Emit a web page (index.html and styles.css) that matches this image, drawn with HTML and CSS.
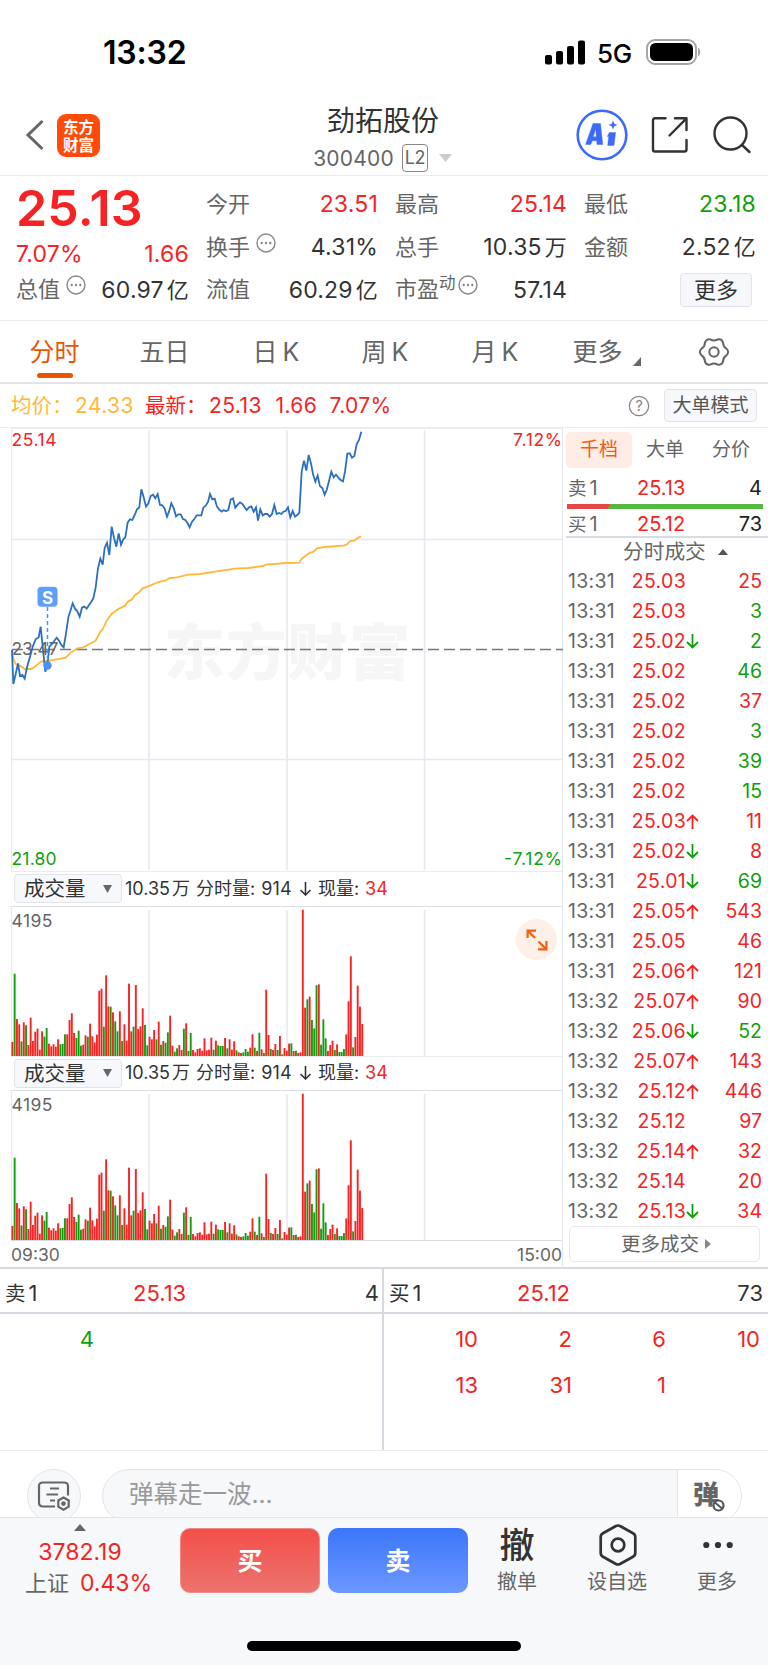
FILE: index.html
```html
<!DOCTYPE html>
<html lang="zh-CN">
<head>
<meta charset="utf-8">
<title>劲拓股份 300400</title>
<link rel="stylesheet" href="styles.css">
</head>
<body>
<div class="statusbar">
  <span class="clock">13:32</span>
  <div class="status-right">
    <svg class="signal" width="40" height="25" viewBox="0 0 40 25"><rect x="0" y="15" width="7" height="9.5" rx="2"/><rect x="11" y="11" width="7" height="13.5" rx="2"/><rect x="22" y="6" width="7" height="18.5" rx="2"/><rect x="33" y="0.5" width="7" height="24" rx="2"/></svg>
    <span class="net">5G</span>
    <svg width="56" height="26" viewBox="0 0 56 26"><rect x="1" y="1" width="49" height="24" rx="8" fill="none" stroke="#a6a6a6" stroke-width="2"/><rect x="4" y="4" width="43" height="18" rx="5.5" fill="#000"/><path d="M52.5 9q3 4 0 8z" fill="#a6a6a6" stroke="#a6a6a6"/></svg>
  </div>
</div>

<header class="header">
  <div class="head-left">
    <svg width="20" height="32" viewBox="0 0 20 32"><path d="M17.5 2L3 16l14.500 14" fill="none" stroke="#666" stroke-width="3"/></svg>
    <div class="logo">东方<br>财富</div>
  </div>
  <div class="head-title">
    <div class="name">劲拓股份</div>
    <div class="code"><span>300400</span><span class="l2">L2</span><svg width="13" height="8" viewBox="0 0 13 8"><path d="M0 0h13L6.500 8z" fill="#ccc"/></svg></div>
  </div>
  <div class="head-right">
    <svg width="52" height="52" viewBox="0 0 52 52"><circle cx="26" cy="26" r="24.300" fill="none" stroke="#3c6bfa" stroke-width="2.600"/><g fill="#3c6bfa" fill-rule="evenodd" stroke="#3c6bfa" stroke-width="0.400" stroke-linejoin="round"><path d="M17 14.500h7.500l2.300 21h-5.800l-.4-3.800h-4.300l-1.500 3.800h-5.300zM17.300 27.800h3l-.6-8z"/><path d="M33.300 23.500h6.300l-1.600 13h-6.300l1-9h-1.400z"/></g><path d="M37 11.500l1.300 3.200 3.200 1.300-3.200 1.300-1.300 3.200-1.300-3.200-3.200-1.300 3.200-1.300z" fill="#3c6bfa"/></svg>
    <svg class="share" width="38" height="38" viewBox="0 0 38 38" fill="none" stroke="#333" stroke-width="2.400" stroke-linecap="round" stroke-linejoin="round"><path d="M14.500 2.300H4Q2 2.300 2 4.300V33.500Q2 35.500 4 35.500H33.500Q35.500 35.500 35.500 33.500V24M24 2.300H35.500V14M35.500 2.300L18.500 19.500"/></svg>
    <svg width="38" height="38" viewBox="0 0 38 38" fill="none" stroke="#333" stroke-width="2.400" stroke-linecap="round"><circle cx="17.500" cy="17.500" r="16"/><path d="M29 29l7.500 7"/></svg>
  </div>
</header>

<section class="quote">
  <div class="qcol first">
    <div class="big red">25.13</div>
    <div class="qrow chg red"><span>7.07%</span><span>1.66</span></div>
    <div class="qrow"><label>总值<svg class="dots"><use href="#i-dots"/></svg></label><span>60.97<i>亿</i></span></div>
  </div>
  <div class="qcol">
    <div class="qrow"><label>今开</label><span class="red">23.51</span></div>
    <div class="qrow"><label>换手<svg class="dots"><use href="#i-dots"/></svg></label><span>4.31%</span></div>
    <div class="qrow"><label>流值</label><span>60.29<i>亿</i></span></div>
  </div>
  <div class="qcol">
    <div class="qrow"><label>最高</label><span class="red">25.14</span></div>
    <div class="qrow"><label>总手</label><span>10.35<i>万</i></span></div>
    <div class="qrow"><label>市盈<sup>动</sup><svg class="dots tight"><use href="#i-dots"/></svg></label><span>57.14</span></div>
  </div>
  <div class="qcol">
    <div class="qrow"><label>最低</label><span class="green">23.18</span></div>
    <div class="qrow"><label>金额</label><span>2.52<i>亿</i></span></div>
    <div class="qrow end"><button class="btn more">更多</button></div>
  </div>
</section>

<nav class="tabs">
  <a class="tab on">分时</a><a class="tab">五日</a><a class="tab">日<b>K</b></a><a class="tab">周<b>K</b></a><a class="tab">月<b>K</b></a>
  <a class="tab tab-more">更多<svg width="8" height="9" viewBox="0 0 8 9"><path d="M8 0v9H0z" fill="#666"/></svg></a>
  <a class="tab"><svg width="34" height="34" viewBox="-17 -17 34 34" fill="none" stroke="#666" stroke-width="2"><path d="M12.460 -3.340Q15.800 0 12.460 3.340Q9.090 5.250 9.120 9.120Q7.900 13.680 3.340 12.460Q0 10.500 -3.340 12.460Q-7.900 13.680 -9.120 9.120Q-9.090 5.250 -12.460 3.340Q-15.800 0 -12.460 -3.340Q-9.090 -5.250 -9.120 -9.120Q-7.900 -13.680 -3.340 -12.460Q0 -10.500 3.340 -12.460Q7.900 -13.680 9.120 -9.120Q9.090 -5.250 12.460 -3.340Z"/><circle r="4.700"/></svg></a>
</nav>

<div class="legend">
  <span class="avg n0">均价：</span><span class="avg n1">24.33</span>
  <span class="red n0">最新：</span><span class="red n2">25.13</span><span class="red n3">1.66</span><span class="red n4">7.07%</span>
  <svg class="help" width="22" height="22" viewBox="0 0 22 22"><circle cx="11" cy="11" r="9.700" fill="none" stroke="#888" stroke-width="1.300"/><text x="11" y="16.300" text-anchor="middle">?</text></svg>
  <button class="btn mode">大单模式</button>
</div>

<main class="main">
  <div class="charts">
    <svg class="price" width="552" height="444" viewBox="11 427 552 444">
      <g class="watermark"><text x="164" y="675" textLength="246">东方财富</text></g>
      <path class="grid" d="M149 430V870M287 430V870M424.500 430V870M12 539.500H563M12 759.500H563"/>
      <path class="edge" d="M11.500 427V871M11 428H563"/>
      <path d="M12 649.500H563" stroke="#777" stroke-width="1.300" stroke-dasharray="11 5"/>
      <text x="11.500" y="655" class="lbl mid" textLength="47">23.47</text>
      <polyline id="avg" fill="none" stroke="#ffb938" stroke-width="1.800"/>
      <polyline id="last" fill="none" stroke="#2a70bf" stroke-width="1.800"/>
      <path d="M47.500 607V662" stroke="#4a90f5" stroke-width="1.500" stroke-dasharray="4 3"/>
      <circle cx="47.500" cy="665.500" r="4.200" fill="#4a90f5"/>
      <rect x="37.500" y="586.700" width="20" height="20" rx="4" fill="#5f9ffb"/>
      <text x="47.500" y="603.500" class="smark">S</text>
      <text x="11.500" y="445.500" class="lbl redf" textLength="45">25.14</text>
      <text x="11.500" y="864.500" class="lbl greenf" textLength="45">21.80</text>
      <text x="562" y="445.500" class="lbl redf" text-anchor="end" textLength="49">7.12%</text>
      <text x="562" y="864.500" class="lbl greenf" text-anchor="end" textLength="58">-7.12%</text>
    </svg>
    <div class="volhead"><button class="btn select">成交量<svg width="9" height="8" viewBox="0 0 9 8"><path d="M0 0h9L4.500 8z" fill="#666"/></svg></button><span class="v1">10.35<i>万</i></span><span class="v2">分时量:</span><span class="v3">914</span><svg class="v4" width="13" height="14" viewBox="0 0 13 14"><path d="M6.500 0v13M1.500 8l5 5 5-5" fill="none" stroke="#333" stroke-width="1.600"/></svg><span class="v5">现量:</span><span class="red">34</span></div>
    <svg class="vol" width="552" height="149" viewBox="11 906 552 149">
      <path class="grid" d="M149 909V1055M287 909V1055M424.500 909V1055"/>
      <path class="edge" d="M11.500 906V1055"/>
      <text x="11.500" y="926" class="lbl mid" textLength="41">4195</text>
      <g id="bars"></g>
    </svg>
    <div class="volhead second"><button class="btn select">成交量<svg width="9" height="8" viewBox="0 0 9 8"><path d="M0 0h9L4.500 8z" fill="#666"/></svg></button><span class="v1">10.35<i>万</i></span><span class="v2">分时量:</span><span class="v3">914</span><svg class="v4" width="13" height="14" viewBox="0 0 13 14"><path d="M6.500 0v13M1.500 8l5 5 5-5" fill="none" stroke="#333" stroke-width="1.600"/></svg><span class="v5">现量:</span><span class="red">34</span></div>
    <svg class="vol last" width="552" height="149" viewBox="11 906 552 149">
      <path class="grid" d="M149 909V1055M287 909V1055M424.500 909V1055"/>
      <path class="edge" d="M11.500 906V1055"/>
      <text x="11.500" y="926" class="lbl mid" textLength="41">4195</text>
      <use href="#bars"/>
    </svg>
    <div class="axis"><span>09:30</span><span>15:00</span></div>
    <div class="expand"><svg width="22" height="22" viewBox="0 0 22 22" fill="none" stroke="#f26010" stroke-width="2.200"><path d="M1.600 9V1.600H10M1.600 1.600L9 9M20.400 12V20.400H12M20.400 20.400L12.500 12.500"/></svg></div>
  </div>

  <aside class="side">
    <div class="sidetabs"><span class="on">千档</span><span>大单</span><span>分价</span></div>
    <div class="lv sell"><span>卖<i>1</i></span><b class="red">25.13</b><em>4</em></div>
    <svg class="ratio" width="196" height="5" viewBox="0 0 196 5"><path d="M0 0H196V5H0z" fill="#56b840"/><path d="M0 0H44L40 5H0z" fill="#e84545"/></svg>
    <div class="lv buy"><span>买<i>1</i></span><b class="red">25.12</b><em>73</em></div>
    <div class="ticktitle">分时成交<svg width="10" height="6" viewBox="0 0 10 6"><path d="M0 6h10L5 0z" fill="#555"/></svg></div>
    <div class="ticks" id="ticks"></div>
    <button class="moreticks">更多成交<svg width="6" height="10" viewBox="0 0 6 10"><path d="M0 0v10l6-5z" fill="#888"/></svg></button>
  </aside>
</main>

<section class="book">
  <div class="half">
    <div class="bhead"><span>卖<i>1</i></span><b>25.13</b><em>4</em></div>
    <div class="cells"><span class="green">4</span></div>
  </div>
  <div class="half">
    <div class="bhead"><span>买<i>1</i></span><b>25.12</b><em>73</em></div>
    <div class="cells red"><span>10</span><span>2</span><span>6</span><span>10</span><span>13</span><span>31</span><span>1</span></div>
  </div>
</section>

<section class="chat">
  <div class="round"><svg width="34" height="31" viewBox="0 0 34 31" fill="none" stroke="#666" stroke-width="2.200"><path d="M18 25.500H6Q2 25.500 2 21.500V5Q2 1.500 6 1.500H27Q31 1.500 31 5V14.500M13 7.500H22M9.500 13.500H21M13 19.500H18"/><path d="M26.500 16.500l5.200 3v6.200l-5.200 3-5.200-3v-6.200z"/><circle cx="26.500" cy="22.600" r="1.300" fill="#666"/></svg></div>
  <div class="pill"><span class="ph">弹幕走一波...</span><div class="toggle"><span>弹</span><svg width="13" height="13" viewBox="0 0 13 13"><circle cx="6.500" cy="6.500" r="5" fill="#fff" stroke="#555" stroke-width="2.200"/><path d="M3 3.500l7 6" stroke="#555" stroke-width="2"/></svg></div></div>
</section>

<footer class="foot">
  <div class="actions">
    <div class="index">
      <svg width="12" height="7" viewBox="0 0 12 7"><path d="M0 7h12L6 0z" fill="#666"/></svg>
      <div class="red iv">3782.19</div>
      <div class="ip"><span>上证</span><b>0.43%</b></div>
    </div>
    <button class="trade tbuy">买</button>
    <button class="trade tsell">卖</button>
    <div class="act a1"><span class="glyph">撤</span><span>撤单</span></div>
    <div class="act a2"><svg width="40" height="44" viewBox="-20 -22 40 44" fill="none" stroke="#333" stroke-width="2.700"><path d="M-2.500 -18.800Q0 -20.200 2.500 -18.800L15 -11.800Q17.300 -10.500 17.300 -8V8Q17.300 10.500 15 11.800L2.500 18.800Q0 20.200 -2.500 18.800L-15 11.800Q-17.300 10.500 -17.300 8V-8Q-17.300 -10.500 -15 -11.800Z"/><circle r="6.300"/></svg><span>设自选</span></div>
    <div class="act a3"><svg width="30" height="44" viewBox="-15 -22 30 44" fill="#333"><circle cx="-11.700" r="3.100"/><circle r="3.100"/><circle cx="11.700" r="3.100"/></svg><span>更多</span></div>
  </div>
  <div class="homebar"></div>
</footer>

<svg width="0" height="0" class="defs"><symbol id="i-dots" viewBox="0 0 20 20"><circle cx="10" cy="10" r="9" fill="none" stroke="#888" stroke-width="1.400"/><circle cx="5.700" cy="10" r="1.200" fill="#888"/><circle cx="10" cy="10" r="1.200" fill="#888"/><circle cx="14.300" cy="10" r="1.200" fill="#888"/></symbol></svg>
<script src="app.js"></script>
</body>
</html>
```
FILE: styles.css
```css
* { box-sizing: border-box; margin: 0; padding: 0; }
body { width: 768px; height: 1665px; background: #fff; color: #333; font-family: Inter, "Noto Sans CJK SC", sans-serif; overflow: hidden; display: flex; flex-direction: column; }
button { font-family: inherit; border: 0; background: none; color: inherit; }
i, em { font-style: normal; }
b { font-weight: 400; }
svg { display: block; flex: none; }
.red { color: #f52323; }
.green { color: #0f9f0f; }
.defs { position: absolute; }
.btn { background: #f7f8fb; border: 1.500px solid #e2e4e9; border-radius: 4px; }

.statusbar { height: 94px; flex: none; display: flex; justify-content: space-between; padding: 32px 66px 0 103px; color: #000; }
.clock { font-size: 32px; line-height: 42px; font-weight: 600; letter-spacing: -0.200px; }
.status-right { display: flex; height: 40px; align-items: center; }
.net { font-size: 26px; font-weight: 500; letter-spacing: -0.200px; margin: 3px 14px 0 12px; }

.header { height: 82px; flex: none; display: grid; grid-template-columns: 300px 166px 302px; border-bottom: 1.500px solid #ececec; }
.head-left { display: flex; align-items: center; padding-left: 25px; gap: 12px; height: 82px; }
.logo { width: 43px; height: 43px; border-radius: 9px; background: #ff4a0a; color: #fff; text-align: center; padding-top: 3px; font: 700 15.500px/18px "Noto Sans CJK SC", sans-serif; }
.head-title { display: flex; flex-direction: column; align-items: center; padding-top: 11px; }
.name { font-size: 28px; line-height: 32px; white-space: nowrap; }
.code { display: flex; align-items: center; height: 28px; margin-top: 7px; font-size: 21px; letter-spacing: 0.200px; color: #666; padding-right: 1px; }
.l2 { width: 26px; height: 28px; border: 1.500px solid #888; border-radius: 4px; font-size: 18px; line-height: 25px; text-align: center; margin: 0 11px 0 8px; letter-spacing: -0.500px; }
.head-right { display: flex; align-items: center; padding-left: 110px; height: 82px; }
.share { margin: 0 24px 0 23px; }

.quote { height: 145px; flex: none; display: grid; grid-template-columns: 173px 172px 172px 172px; column-gap: 17px; padding: 7px 0 0 16px; border-bottom: 1.500px solid #ececec; font-size: 23px; letter-spacing: 0.200px; }
.qcol { display: flex; flex-direction: column; }
.qrow { height: 42.700px; display: flex; align-items: center; justify-content: space-between; line-height: 42px; white-space: nowrap; }
.qrow i { font-size: 22px; margin-left: 3px; }
.qrow label { display: flex; color: #666; font-size: 22px; height: 43px; letter-spacing: 0; }
.qrow.end { justify-content: flex-end; padding-right: 4px; }
.big { height: 50px; line-height: 50px; font-size: 50px; font-weight: 600; }
.chg { height: 35.400px; padding-top: 6px; }
.dots { width: 20px; height: 20px; margin: 7px 0 0 6px; }
.dots.tight { margin-left: 2px; }
.qrow sup { font-size: 16.500px; line-height: 30px; }
.more { width: 72px; height: 34px; font-size: 22px; line-height: 30px; }

.tabs { height: 63px; flex: none; position: relative; border-bottom: 2px solid #e3e4ea; display: grid; grid-template-columns: 109px 111px 112px 106px 114px 109px 105px; font-size: 25px; color: #666; }
.tab { display: flex; justify-content: center; align-items: center; line-height: 60px; position: relative; }
.tab b { margin-left: 5px; }
.tab.on { color: #ea5504; }
.tab.on::after { content: ""; position: absolute; left: 37px; top: 52px; width: 36px; height: 5px; border-radius: 2.500px; background: #ea5504; }
.tab-more svg { margin: 20px 0 0 10px; }

.legend { height: 44px; flex: none; display: flex; align-items: center; padding: 0 11px; font-size: 20.500px; line-height: 28px; border-bottom: 1.500px solid #eee; white-space: nowrap; }
.avg { color: #ffb938; }
.n0 { width: 64px; }
.n1 { width: 70px; }
.n2 { width: 66.500px; }
.n3 { width: 54px; }
.n1, .n2, .n3, .n4 { font-size: 21px; letter-spacing: 0.400px; }
.help { margin-left: auto; margin-right: 14px; }
.help text { font: 15px Inter, sans-serif; fill: #888; }
.mode { width: 93px; height: 33px; font-size: 19px; line-height: 30px; color: #555; }

.main { height: 842px; flex: none; display: grid; grid-template-columns: 552px 205px; padding-left: 11px; margin-top: -1px; border-bottom: 2px solid #d6d9e0; }
.charts { position: relative; display: flex; flex-direction: column; width: 552px; border-right: 1.500px solid #e3e5ec; }
.grid { stroke: #e5e8f0; stroke-width: 1.500; fill: none; }
.edge { stroke: #e8eaef; stroke-width: 1.500; fill: none; }
.lbl { font: 17.500px Inter, sans-serif; }
.mid { fill: #666; }
.redf { fill: #f52323; }
.greenf { fill: #0f9f0f; }
.smark { font: 700 17px Inter, sans-serif; fill: #fff; text-anchor: middle; }
.watermark text { font: 900 61px "Noto Sans CJK SC", sans-serif; fill: #f6f6f6; }
.volhead { height: 35.500px; flex: none; border-top: 1.500px solid #ececf0; border-bottom: 1.500px solid #dcdee5; display: flex; align-items: center; padding-left: 3px; font-size: 18px; line-height: 26px; white-space: nowrap; }
.volhead i { margin-left: 2px; }
.select { width: 108px; height: 29px; display: flex; align-items: center; justify-content: space-between; padding: 0 9px; font-size: 20.500px; line-height: 27px; margin-right: 3px; }
.v2 { margin-left: 6px; }
.v3 { margin-left: 6px; letter-spacing: 0.200px; }
.v4 { margin: 0 6px 0 7px; }
.v5 { margin-right: 6px; }
.axis { border-top: 1.500px solid #d9dce4; display: flex; justify-content: space-between; font-size: 17.500px; line-height: 28px; color: #666; flex: 1; }
.expand { position: absolute; left: 505px; top: 492px; width: 41px; height: 41px; border-radius: 50%; background: #fef0e9; display: flex; align-items: center; justify-content: center; }

.side { display: flex; flex-direction: column; padding: 5px 0 0 3px; color: #666; }
.sidetabs { display: grid; grid-template-columns: repeat(3, 66px); height: 36px; font-size: 19px; line-height: 36px; text-align: center; flex: none; }
.sidetabs .on { background: #ffede5; color: #f8590b; border-radius: 5px; }
.lv { display: grid; grid-template-columns: 69px 60px 1fr; padding: 0 6px 0 2px; height: 34px; line-height: 34px; font-size: 20px; flex: none; }
.lv span { font-size: 18.500px; }
.lv i { font-size: 20px; margin-left: 3px; }
.lv em { text-align: right; color: #222; }
.sell { margin-top: 3px; height: 33px; }
.ratio { margin-left: 1px; }
.buy { height: 28.500px; line-height: 31px; border-bottom: 2px solid #d9dce3; }
.ticktitle { height: 28.500px; flex: none; display: flex; align-items: center; font-size: 20.700px; line-height: 28px; padding: 1px 0 0 57px; gap: 12px; }
.ticks { flex: none; }
.tick { height: 30.030px; line-height: 30px; display: grid; grid-template-columns: 49px 69px 16px 1fr; padding: 0 6px 0 2px; font-size: 19.500px; letter-spacing: 0.300px; align-items: center; }
.tick .p, .tick .q { text-align: right; }
.tick .q { letter-spacing: 0; }
.tick svg { margin-left: 0; }
.moreticks { width: 191px; height: 36px; margin: 0 0 0 3px; border: 1.500px solid #e8e8ec; border-radius: 5px; font-size: 19.500px; line-height: 32px; display: flex; align-items: center; justify-content: center; gap: 6px; flex: none; padding-left: 3px; }

.book { height: 182px; flex: none; display: grid; grid-template-columns: 384px 384px; border-bottom: 1.500px solid #ececec; font-size: 22px; }
.half:first-child { border-right: 2px solid #d6d9e0; }
.bhead { height: 44.500px; padding: 2px 5px 0 5px; line-height: 44px; border-bottom: 2px solid #d6d9e0; display: grid; grid-template-columns: 128px 80px 1fr; }
.bhead span { font-size: 20.500px; }
.bhead i { font-size: 22px; margin-left: 3px; }
.bhead b { color: #f52323; }
.bhead em { text-align: right; }
.half:first-child .bhead { padding-right: 3px; }
.cells { padding-top: 2px; display: grid; grid-template-columns: repeat(4, 94px); grid-auto-rows: 46px; line-height: 46px; text-align: right; }

.chat { height: 66px; flex: none; display: flex; padding: 18px 26px 0 27px; gap: 21px; overflow: hidden; }
.round { width: 54px; height: 54px; flex: none; border: 1.500px solid #e3e4e9; border-radius: 50%; background: #f7f8fa; display: flex; align-items: center; justify-content: center; }
.pill { flex: 1; height: 54px; border: 1.500px solid #e3e4e9; border-radius: 27px; background: #f7f8fa; display: flex; justify-content: space-between; overflow: hidden; }
.ph { padding-left: 26px; font-size: 24.500px; line-height: 48px; color: #999; }
.toggle { width: 64px; background: #fff; border-left: 1.500px solid #e3e4e9; position: relative; }
.toggle span { display: block; font-size: 26px; font-weight: 900; line-height: 50px; padding-left: 15px; color: #666; }
.toggle svg { position: absolute; left: 34px; top: 29px; }

.foot { height: 148px; flex: none; background: #f7f8fa; border-top: 1.500px solid #e3e4e9; display: flex; flex-direction: column; align-items: center; }
.actions { width: 768px; height: 123px; display: flex; padding: 6px 0 0 22px; }
.index { width: 132px; display: flex; flex-direction: column; align-items: center; margin-right: 26px; font-size: 23px; }
.index svg { margin-right: 16px; }
.iv { line-height: 30px; margin: 6px 16px 0 0; }
.ip { display: flex; gap: 11px; line-height: 33px; white-space: nowrap; color: #666; font-size: 22px; padding-left: 1px; }
.ip b { color: #f52323; font-size: 23px; }
.trade { width: 140px; height: 65px; margin: 4px 8px 0 0; border-radius: 10px; color: #fff; font-size: 25px; font-weight: 700; line-height: 60px; }
.tbuy { background: linear-gradient(#f44f4a, #ec736e); border: 1px solid #f08a86; }
.tsell { background: linear-gradient(#3b76f9, #6c98ff); }
.act { display: flex; flex-direction: column; align-items: center; font-size: 20px; line-height: 28px; color: #666; }
.act svg { margin: -1px 0 1px 1px; }
.glyph { font-size: 35px; line-height: 44px; color: #333; font-weight: 500; margin: -1px 0 1px; }
.a1 { width: 62px; margin-left: 10px; }
.a2 { width: 62px; margin-left: 38px; }
.a3 { width: 62px; margin-left: 38px; }
.homebar { width: 274px; height: 10px; border-radius: 5px; background: #000; }
```
FILE: app.js
```js
// Chart plot units are thirds of a pixel, measured from y = 420.
const toPoints = (list) => list.trim().split(/\s+/).map((p) => {
  const [x, y] = p.split(',').map(Number);
  return (x / 3).toFixed(2) + ',' + (420 + y / 3).toFixed(2);
}).join(' ');

const last = `36,690 40,792 47,762 54,730 60,768 67,765 74,776 81,742 90,710 98,680 107,658 116,652 122,620 129,690 136,755 142,735 148,680 156,672 163,662 170,653 177,662 184,675 191,682 198,640 205,592 212,570 218,550 225,566 232,574 239,590 246,563 253,560 260,566 267,555 274,545 280,535 287,502 294,445 301,416 308,434 314,384 321,368 328,405 335,320 342,353 349,380 356,340 363,374 370,358 376,352 383,308 390,298 397,300 404,285 411,268 418,262 424,208 431,232 438,260 445,250 452,228 459,224 466,235 473,222 480,255 487,256 494,266 501,290 507,275 514,250 521,264 528,289 535,283 542,283 549,297 556,300 563,310 569,322 576,305 583,297 590,286 604,286 610,263 617,257 624,246 630,222 637,238 644,236 651,260 658,269 665,275 671,270 678,274 685,270 692,239 699,235 706,263 713,254 720,247 727,252 740,270 747,262 754,259 761,275 768,262 774,302 781,268 788,286 795,282 802,282 809,290 816,282 823,255 830,282 837,279 844,282 850,275 857,273 864,262 871,292 878,273 885,290 891,286 898,278 905,155 912,122 919,152 926,105 933,130 939,162 946,185 953,167 960,199 967,204 974,224 980,210 987,183 994,155 1001,172 1008,164 1015,173 1022,180 1029,184 1035,155 1042,101 1049,100 1056,113 1063,108 1070,73 1077,60 1084,35`;
const avg = `37,690 40,715 47,732 60,737 75,747 95,747 110,736 122,725 140,723 170,718 197,713 210,700 232,685 250,682 287,662 300,636 308,628 320,602 335,582 355,567 375,557 385,544 395,539 405,525 415,519 428,505 450,497 475,486 495,482 510,474 530,472 565,464 600,462 650,454 705,446 745,444 790,438 797,434 860,429 898,428 905,416 927,400 940,395 952,385 972,381 1030,377 1040,374 1050,363 1063,362 1073,354 1083,349`;
document.getElementById('last').setAttribute('points', toPoints(last));
document.getElementById('avg').setAttribute('points', toPoints(avg));

// Volume bars: height in thirds of a pixel, "g" marks a falling minute.
const volume = `42 247g 111 95 44g 101 92g 33 115 45 73 82 19 74 58g 84g 37 29 35 28 50 35g 36g 65g 65 108 128 69 54g 76g 31g 34 62 58g 97 59 41 64 196 202 88g 242 149 148g 131 104g 74g 134 45g 95 46 217 74 88g 213 81 89 143 93g 32g 58 50 78 50g 103 34g 45 40g 71g 121 31 13g 23g 33 18 82g 98 15g 69g 18 11 21 23 16 53 17 19 55 19g 46 32g 30g 30g 54 23g 50 19 44 17g 11 9 11g 21g 13g 25 65 25g 15 70g 20 9g 199 63 21g 18 36 18g 60 5g 24 16 37 38g 15 16g 9 11 439 145 170g 178 108g 83g 212g 215 34g 110g 53g 15 33 46 18g 35 12g 12g 21g 65 164 299 26g 57 211 148 96`;
const ns = 'http://www.w3.org/2000/svg';
const bars = document.getElementById('bars');
volume.split(' ').forEach((v, i) => {
  const h = parseInt(v, 10) / 3;
  const r = document.createElementNS(ns, 'rect');
  r.setAttribute('x', (11.4 + i * 2.287).toFixed(2));
  r.setAttribute('y', (1055 - h).toFixed(2));
  r.setAttribute('width', 1.9);
  r.setAttribute('height', h.toFixed(2));
  r.setAttribute('fill', v.endsWith('g') ? '#10a010' : '#fa2323');
  bars.appendChild(r);
});

const trades = `13:31 25.03 - 25 r|13:31 25.03 - 3 g|13:31 25.02 d 2 g|13:31 25.02 - 46 g|13:31 25.02 - 37 r|13:31 25.02 - 3 g|13:31 25.02 - 39 g|13:31 25.02 - 15 g|13:31 25.03 u 11 r|13:31 25.02 d 8 r|13:31 25.01 d 69 g|13:31 25.05 u 543 r|13:31 25.05 - 46 r|13:31 25.06 u 121 r|13:32 25.07 u 90 r|13:32 25.06 d 52 g|13:32 25.07 u 143 r|13:32 25.12 u 446 r|13:32 25.12 - 97 r|13:32 25.14 u 32 r|13:32 25.14 - 20 r|13:32 25.13 d 34 r`;
const arrows = {
  u: '<svg width="13" height="15" viewBox="0 0 13 15"><path d="M6.500 15V1.500M1 7l5.500-5.500L12 7" fill="none" stroke="#f52323" stroke-width="1.800"/></svg>',
  d: '<svg width="13" height="15" viewBox="0 0 13 15"><path d="M6.500 0v13.500M1 8l5.500 5.500L12 8" fill="none" stroke="#0f9f0f" stroke-width="1.800"/></svg>',
  '-': '<span></span>'
};
document.getElementById('ticks').innerHTML = trades.split('|').map((t) => {
  const [time, price, dir, qty, c] = t.split(' ');
  return `<div class="tick"><span>${time}</span><span class="p red">${price}</span>${arrows[dir]}<span class="q ${c === 'r' ? 'red' : 'green'}">${qty}</span></div>`;
}).join('');
```
